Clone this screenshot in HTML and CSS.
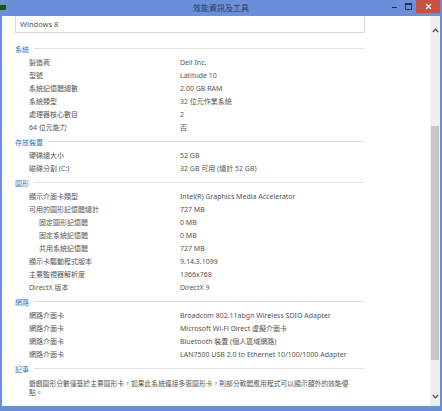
FILE: index.html
```html
<!DOCTYPE html>
<html lang="zh-Hant">
<head>
    <meta charset="UTF-8">
    <title>效能資訊及工具</title>
    <link rel="stylesheet" href="styles.css">
</head>
<body>
    <div class="ventana">
        <!-- Barra de título -->
        <div class="barra-titulo">
            <div class="icono-app"></div>
            <div class="titulo">效能資訊及工具</div>
            <div class="controles">
                <div class="btn btn-min"><span></span></div>
                <div class="btn btn-max"><span></span></div>
                <div class="btn btn-cerrar">
                    <svg width="7" height="7" viewBox="0 0 7 7"><path d="M1 1L6 6M6 1L1 6" stroke="#fff" stroke-width="1.3"/></svg>
                </div>
            </div>
        </div>

        <div class="principal">
            <div class="contenido">
                <div class="caja-os">Windows 8</div>

                <div class="seccion">
                    <div class="encabezado">系統</div>
                    <div class="fila"><span>製造商</span><span>Dell Inc.</span></div>
                    <div class="fila"><span>型號</span><span>Latitude 10</span></div>
                    <div class="fila"><span>系統記憶體總數</span><span>2.00 GB RAM</span></div>
                    <div class="fila"><span>系統類型</span><span>32 位元作業系統</span></div>
                    <div class="fila"><span>處理器核心數目</span><span>2</span></div>
                    <div class="fila"><span>64 位元能力</span><span>否</span></div>
                </div>

                <div class="seccion">
                    <div class="encabezado">存放裝置</div>
                    <div class="fila"><span>硬碟總大小</span><span>52 GB</span></div>
                    <div class="fila"><span>磁碟分割 (C:)</span><span>32 GB 可用 (總計 52 GB)</span></div>
                </div>

                <div class="seccion">
                    <div class="encabezado">圖形</div>
                    <div class="fila"><span>顯示介面卡類型</span><span>Intel(R) Graphics Media Accelerator</span></div>
                    <div class="fila"><span>可用的圖形記憶體總計</span><span>727 MB</span></div>
                    <div class="fila sub"><span>固定圖形記憶體</span><span>0 MB</span></div>
                    <div class="fila sub"><span>固定系統記憶體</span><span>0 MB</span></div>
                    <div class="fila sub"><span>共用系統記憶體</span><span>727 MB</span></div>
                    <div class="fila"><span>顯示卡驅動程式版本</span><span>9.14.3.1099</span></div>
                    <div class="fila"><span>主要監視器解析度</span><span>1366x768</span></div>
                    <div class="fila"><span>DirectX 版本</span><span>DirectX 9</span></div>
                </div>

                <div class="seccion">
                    <div class="encabezado">網路</div>
                    <div class="fila"><span>網路介面卡</span><span>Broadcom 802.11abgn Wireless SDIO Adapter</span></div>
                    <div class="fila"><span>網路介面卡</span><span>Microsoft Wi-Fi Direct 虛擬介面卡</span></div>
                    <div class="fila"><span>網路介面卡</span><span>Bluetooth 裝置 (個人區域網路)</span></div>
                    <div class="fila"><span>網路介面卡</span><span>LAN7500 USB 2.0 to Ethernet 10/100/1000 Adapter</span></div>
                </div>

                <div class="seccion">
                    <div class="encabezado">記事</div>
                    <p class="nota">遊戲圖形分數僅基於主要圖形卡，如果此系統連接多張圖形卡，則部分軟體應用程式可以顯示額外的效能優點。</p>
                </div>
            </div>

            <!-- Barra de desplazamiento -->
            <div class="scroll">
                <div class="flecha flecha-arriba">
                    <svg width="7" height="5" viewBox="0 0 7 5"><path d="M0.8 4L3.5 1.2L6.2 4" fill="none" stroke="#555" stroke-width="1.4"/></svg>
                </div>
                <div class="pulgar"></div>
                <div class="flecha flecha-abajo">
                    <svg width="7" height="5" viewBox="0 0 7 5"><path d="M0.8 1L3.5 3.8L6.2 1" fill="none" stroke="#555" stroke-width="1.4"/></svg>
                </div>
            </div>
        </div>
    </div>
</body>
</html>
```

FILE: styles.css
```css
body {
    margin: 0;
    font-family: "Noto Sans", "Noto Sans CJK TC", sans-serif;
}

.ventana {
    width: 442px;
    height: 411px;
    background: #6b8fd8;
    display: flex;
    flex-direction: column;
}

/* Barra de título */
.barra-titulo {
    height: 16px;
    display: grid;
    grid-template-columns: 1fr auto 1fr;
}

.icono-app {
    width: 6px;
    height: 5px;
    margin-top: 4px;
    background: #1f4d2a;
    border-top: 1px solid #5fae5a;
}

.titulo {
    font-size: 8px;
    line-height: 15px;
    color: #2e3a5c;
}

.controles {
    display: flex;
    justify-content: flex-end;
    margin-right: 2px;
}

.btn {
    width: 14px;
    height: 13px;
    display: flex;
    justify-content: center;
    align-items: center;
}

.btn-min span {
    width: 5px;
    height: 1px;
    margin-top: 2px;
    background: #2a2f45;
}

.btn-max span {
    width: 5px;
    height: 4px;
    border: 1px solid #2a2f45;
    border-top-width: 2px;
}

.btn-cerrar {
    width: 24px;
    margin-left: 1px;
    background: #c9503f;
}

/* Contenido */
.principal {
    flex: 1;
    display: flex;
    margin: 0 2px 5px;
    background: #fff;
    overflow: hidden;
}

.contenido {
    flex: 1;
    padding-left: 13px;
    font-size: 7px;
    color: #555;
}

.caja-os {
    width: 344px;
    height: 16px;
    margin-bottom: 8px;
    padding-left: 4px;
    line-height: 16px;
    font-size: 7.5px;
    color: #555;
    border: 1px solid #d8d8d8;
    border-top: none;
}

.seccion {
    width: 349px;
}

.encabezado {
    height: 15px;
    display: flex;
    align-items: center;
    gap: 5px;
    color: #2f79c2;
}

.encabezado::after {
    content: "";
    flex: 1;
    height: 1px;
    background: #e1e1e1;
}

.fila {
    display: grid;
    grid-template-columns: 151px 1fr;
    padding-left: 14px;
    line-height: 13px;
    white-space: nowrap;
}

.fila.sub span:first-child {
    padding-left: 10px;
}

.nota {
    margin: 0;
    padding: 3px 0 0 14px;
    width: 322px;
    font-size: 6.8px;
    line-height: 9px;
}

/* Barra de desplazamiento */
.scroll {
    width: 10px;
    background: #f0f0f0;
    display: flex;
    flex-direction: column;
}

.flecha {
    height: 28px;
    display: flex;
    justify-content: center;
    align-items: center;
}

.flecha-abajo {
    height: 20px;
    margin-top: auto;
}

.pulgar {
    margin: 82px 1px 0;
    height: 234px;
    background: #c6c6c6;
}
```
